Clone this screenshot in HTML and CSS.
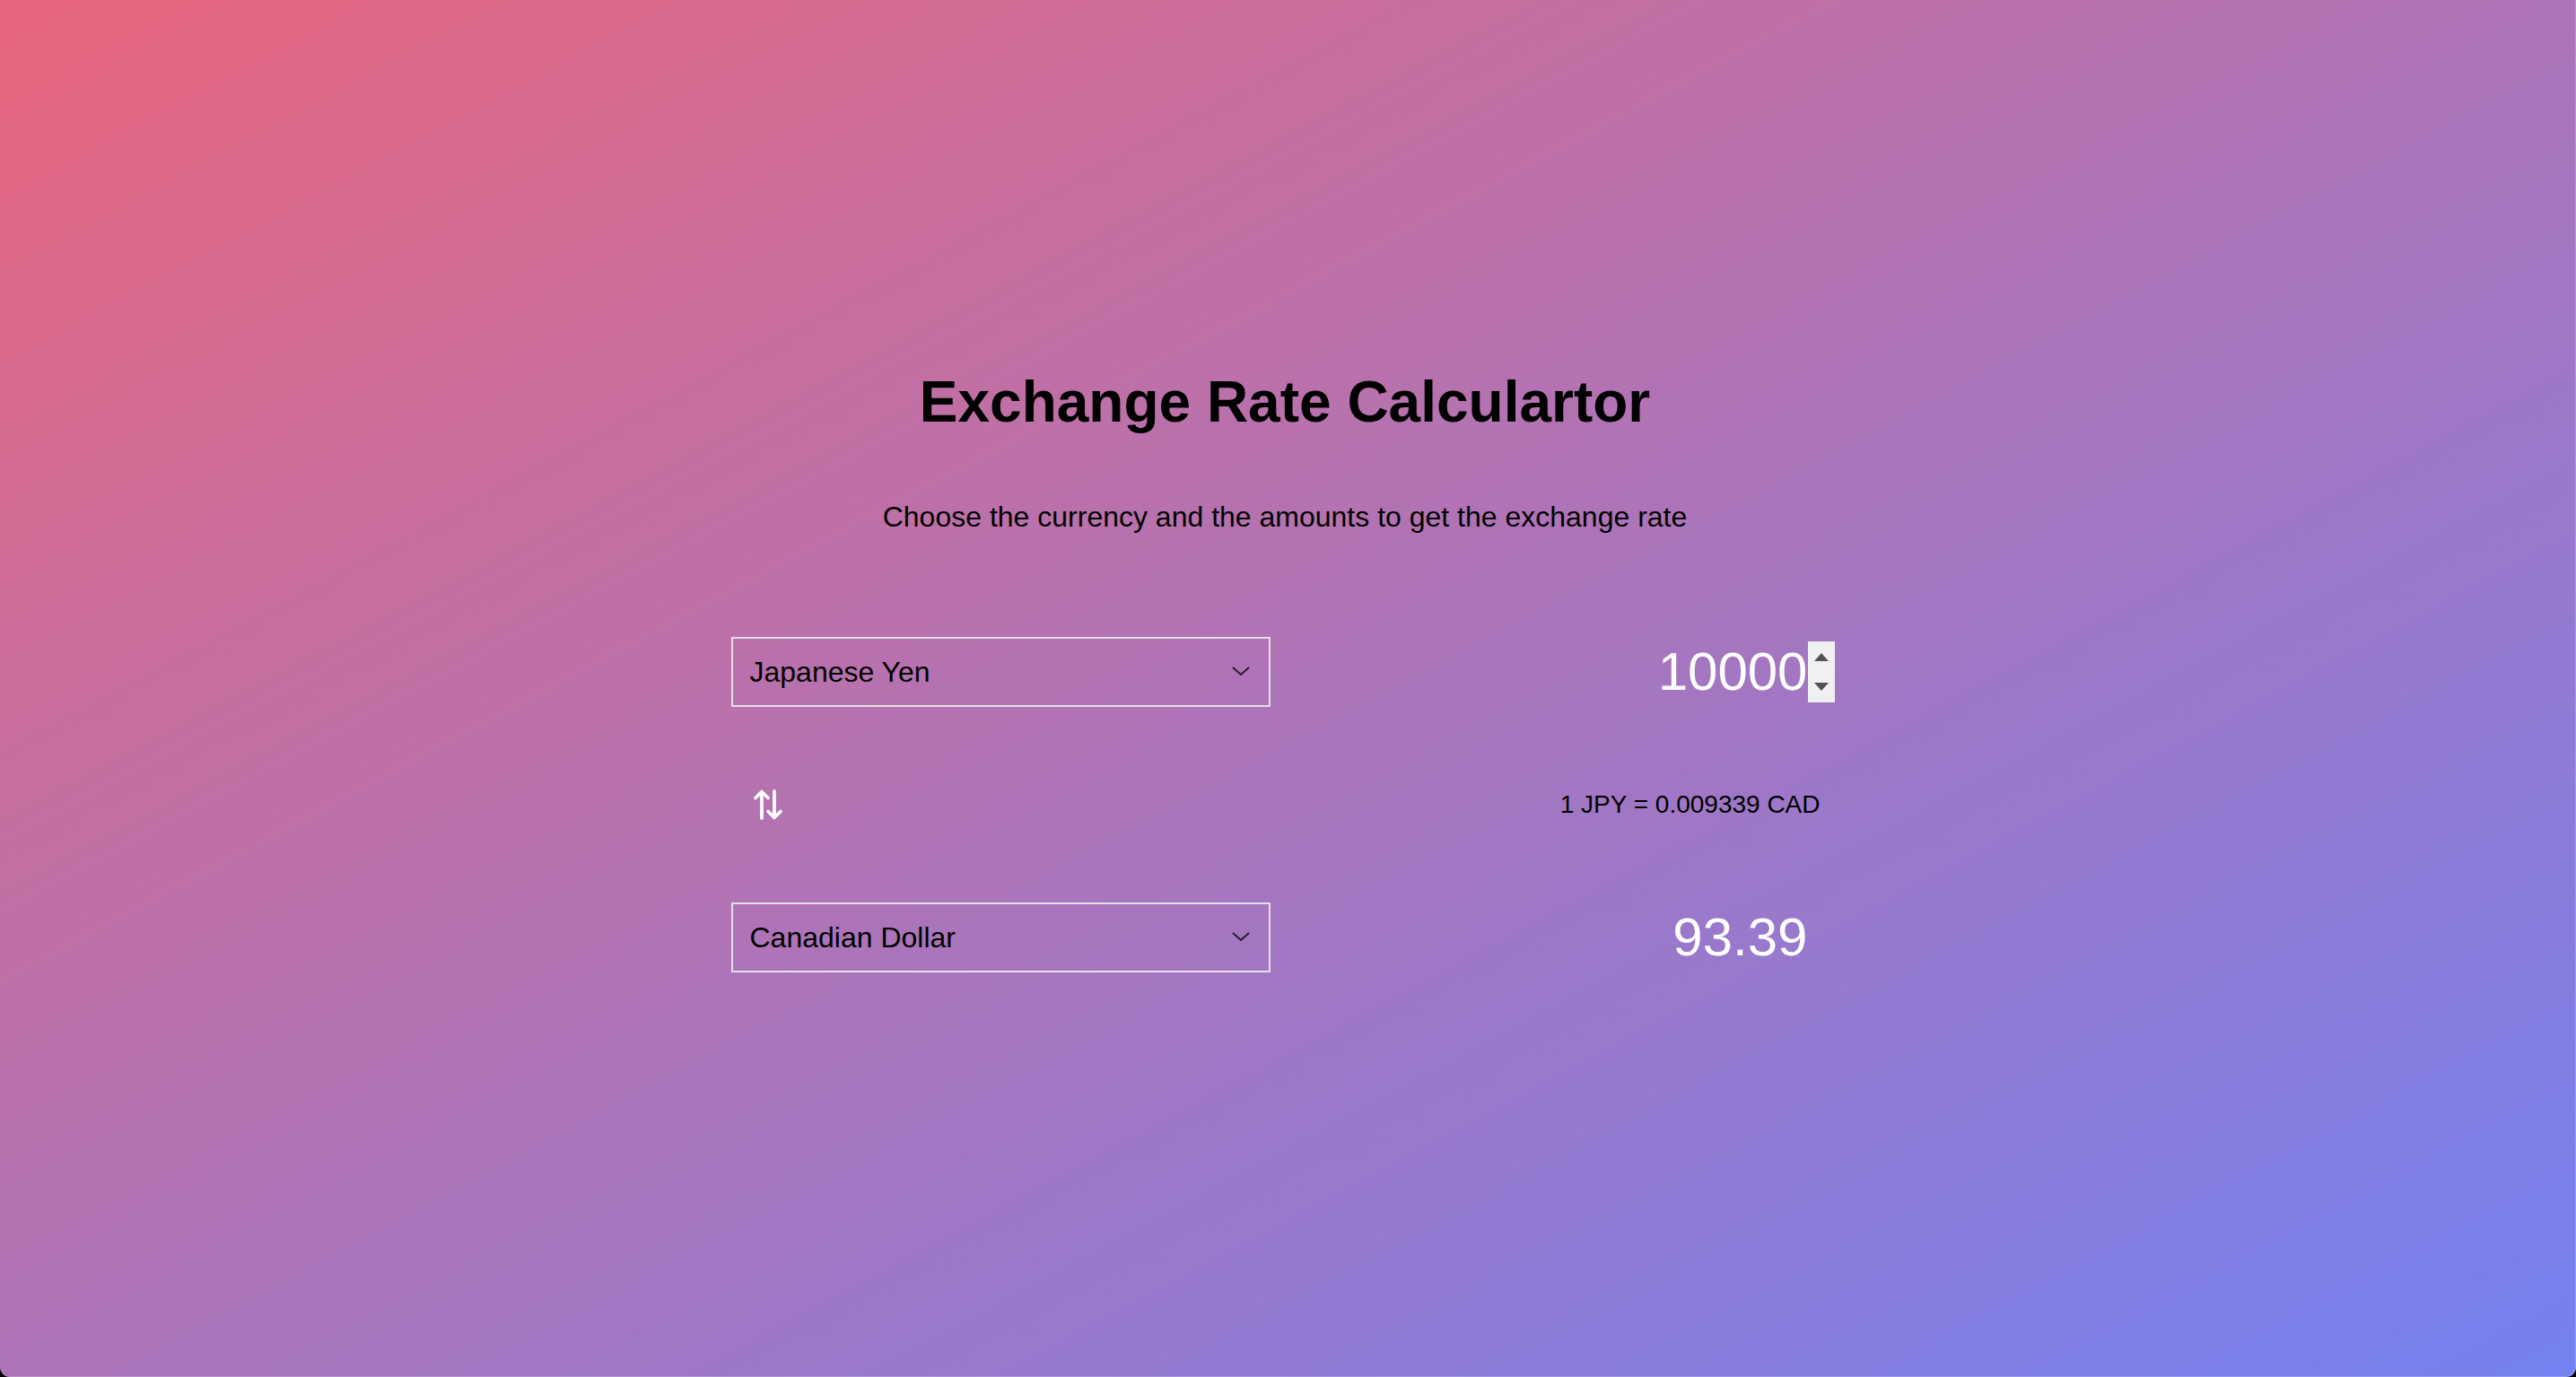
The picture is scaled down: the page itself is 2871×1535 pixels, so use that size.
FILE: index.html
```html
<!DOCTYPE html>
<html lang="en">
<head>
<meta charset="utf-8">
<title>Exchange Rate Calculartor</title>
<link rel="stylesheet" href="styles.css">
</head>
<body>
<main class="app">
  <h1 class="title">Exchange Rate Calculartor</h1>
  <p class="subtitle">Choose the currency and the amounts to get the exchange rate</p>
  <div class="converter">
    <div class="row">
      <div class="select">
        <span class="select-label">Japanese Yen</span>
        <svg class="chevron" width="20" height="10" viewBox="0 0 20 10"><polyline points="1,1 10,9 19,1" fill="none" stroke="#1e1a22" stroke-width="1.8"/></svg>
      </div>
      <div class="amount">
        <span class="amount-value">10000</span>
        <div class="spinner">
          <span class="tri tri-up"></span>
          <span class="tri tri-down"></span>
        </div>
      </div>
    </div>
    <div class="row">
      <div class="swap">
        <svg width="40" height="40" viewBox="0 0 40 40" fill="none" stroke="#fff" stroke-width="3.8" stroke-linecap="round" stroke-linejoin="round">
          <path d="M13 35 V6 M6 12.5 L13 5.5 L20 12.5"/>
          <path d="M27 5 V34 M20 27.5 L27 34.5 L34 27.5"/>
        </svg>
      </div>
      <div class="rate">1 JPY = 0.009339 CAD</div>
    </div>
    <div class="row">
      <div class="select">
        <span class="select-label">Canadian Dollar</span>
        <svg class="chevron" width="20" height="10" viewBox="0 0 20 10"><polyline points="1,1 10,9 19,1" fill="none" stroke="#1e1a22" stroke-width="1.8"/></svg>
      </div>
      <div class="amount">
        <span class="amount-value">93.39</span>
        <div class="spinner spinner-hidden"></div>
      </div>
    </div>
  </div>
</main>
</body>
</html>
```

FILE: styles.css
```css
html {
  background: #000;
}

body {
  margin: 0;
  height: 100vh;
  overflow: hidden;
  font-family: "Liberation Sans", Arial, sans-serif;
  color: #000;
  background: linear-gradient(to bottom right, #e8667d 0%, #ad74b8 50%, #7381f0 100%);
  border-radius: 0 0 11px 11px;
  box-shadow: inset -1px -1px 0 rgba(255, 255, 255, 0.22);
}

.app {
  display: flex;
  flex-direction: column;
  align-items: center;
  padding-top: 408px;
}

.title {
  margin: 0 7px 0 0;
  font-size: 64px;
  line-height: 80px;
  font-weight: 700;
}

.subtitle {
  margin: 68px 7px 0 0;
  font-size: 32px;
  line-height: 40px;
}

.converter {
  box-sizing: border-box;
  width: 1240px;
  padding-right: 10px;
  margin: 114px 2px 0 0;
  display: flex;
  flex-direction: column;
  gap: 70px;
}

.row {
  height: 78px;
  display: flex;
  align-items: center;
  justify-content: space-between;
}

.select {
  box-sizing: border-box;
  width: 601px;
  height: 78px;
  border: 2px solid #e2e0e6;
  display: flex;
  align-items: center;
  justify-content: space-between;
  padding: 0 21px 0 19px;
}

.select-label {
  font-size: 32px;
  line-height: 40px;
}

.chevron {
  display: block;
  margin-top: -2px;
}

.amount {
  display: flex;
  align-items: center;
  color: #fff;
}

.amount-value {
  font-size: 60px;
  line-height: 68px;
}

.spinner {
  width: 30px;
  height: 68px;
  background: #f0f0f0;
  display: flex;
  flex-direction: column;
  align-items: center;
  justify-content: space-between;
  padding: 13px 0;
  box-sizing: border-box;
}

.spinner-hidden {
  background: transparent;
}

.tri {
  width: 0;
  height: 0;
  border-left: 8px solid transparent;
  border-right: 8px solid transparent;
}

.tri-up {
  border-bottom: 9px solid #525252;
}

.tri-down {
  border-top: 9px solid #525252;
}

.swap {
  margin-left: 21px;
  width: 40px;
  height: 40px;
}

.swap svg {
  display: block;
}

.rate {
  margin-right: 16px;
  font-size: 28px;
  line-height: 34px;
}
```
